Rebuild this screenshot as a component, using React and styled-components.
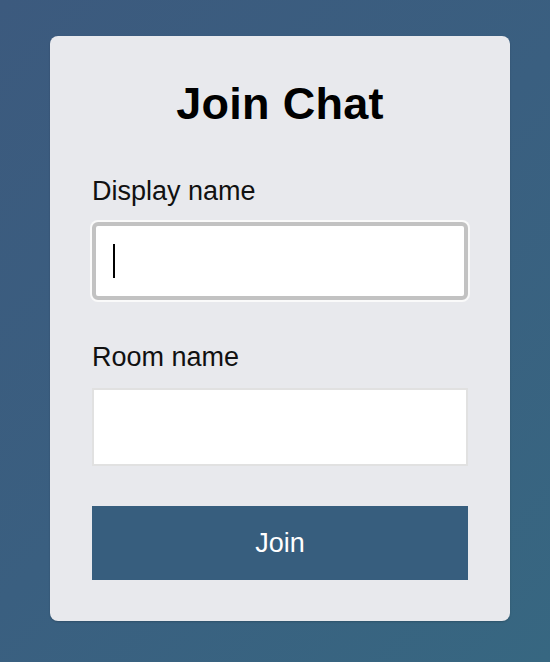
import React from "react";
import styled, { createGlobalStyle } from "styled-components";

const GlobalStyle = createGlobalStyle`
  html, body {
    margin: 0;
    padding: 0;
  }
  body {
    font-family: "Liberation Sans", Arial, Helvetica, sans-serif;
    background: linear-gradient(135deg, #3c5a7e 0%, #3a5f80 50%, #376781 100%);
    min-height: 662px;
  }
  * { box-sizing: border-box; }
`;

const Page = styled.div`
  display: flex;
  justify-content: flex-start;
  padding: 36px 0 41px 50px;
  min-height: 662px;
`;

const Card = styled.div`
  width: 460px;
  flex-shrink: 0;
  background: #e8e9ed;
  border-radius: 8px;
  box-shadow: 0 1px 2px rgba(0, 0, 0, 0.18);
  padding: 42px 42px 41px;
  display: flex;
  flex-direction: column;
`;

const Title = styled.h1`
  margin: 0 0 45px;
  font-size: 45px;
  line-height: 52px;
  font-weight: 700;
  color: #000;
  text-align: center;
  letter-spacing: 0.3px;
`;

const Field = styled.div`
  display: flex;
  flex-direction: column;
  gap: 15px;
  margin-bottom: ${(p) => p.$mb}px;
`;

const Label = styled.label`
  font-size: 27px;
  line-height: 32px;
  color: #111;
  font-weight: 400;
`;

const InputWrap = styled.div`
  position: relative;
  height: 78px;
`;

const Input = styled.input`
  display: block;
  width: 100%;
  height: 78px;
  margin: 0;
  padding: 0 17px;
  font-family: inherit;
  font-size: 27px;
  background: #fff;
  outline: none;
  border: ${(p) => (p.$focused ? "4px solid #c2c2c2" : "2px solid #e1e1e1")};
  border-radius: ${(p) => (p.$focused ? "6px" : "0")};
  box-shadow: ${(p) => (p.$focused ? "0 0 0 2px #fafafa" : "none")};
  caret-color: transparent;
`;

const Caret = styled.span`
  position: absolute;
  left: 21px;
  top: 22px;
  width: 2px;
  height: 34px;
  background: #000;
  pointer-events: none;
`;

const Button = styled.button`
  display: block;
  width: 100%;
  height: 74px;
  margin: 0;
  border: none;
  border-radius: 0;
  background: #375e7e;
  color: #fff;
  font-family: inherit;
  font-size: 27px;
  font-weight: 400;
  cursor: pointer;
`;

export default function App() {
  return (
    <>
      <GlobalStyle />
      <Page>
        <Card>
          <Title>Join Chat</Title>
          <Field $mb={41}>
            <Label htmlFor="display">Display name</Label>
            <InputWrap>
              <Input id="display" type="text" $focused />
              <Caret />
            </InputWrap>
          </Field>
          <Field $mb={40}>
            <Label htmlFor="room">Room name</Label>
            <InputWrap>
              <Input id="room" type="text" />
            </InputWrap>
          </Field>
          <Button type="button">Join</Button>
        </Card>
      </Page>
    </>
  );
}
